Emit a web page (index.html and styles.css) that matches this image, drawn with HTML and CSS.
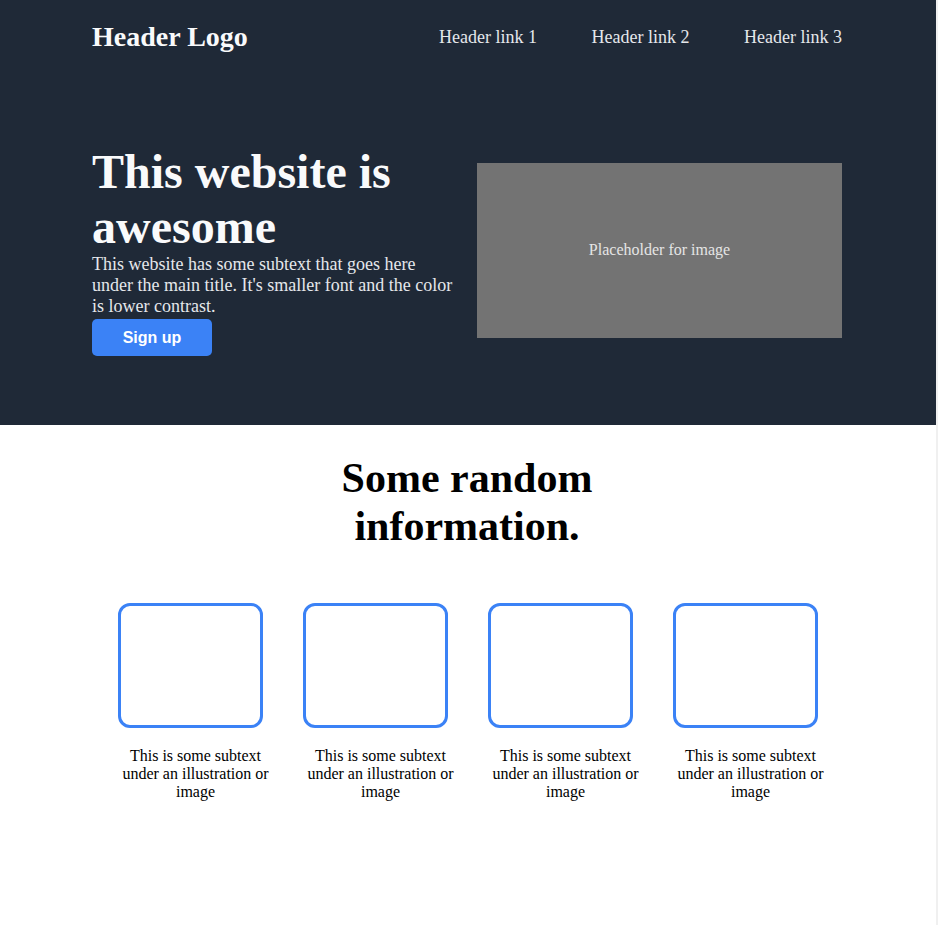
FILE: index.html
```html
<!DOCTYPE html>
<html lang="en">
<head>
  <meta charset="UTF-8" />
  <meta name="viewport" content="width=device-width, initial-scale=1.0"/>
  <title>Landing Page</title>
  <link rel="stylesheet" href="styles.css">
</head>
<body>
  <header class="hero">
    <div class="container">
      <div class="topbar">
        <div class="logo">Header Logo</div>
        <nav class="links">
          <a href="#">Header link 1</a>
          <a href="#">Header link 2</a>
          <a href="#">Header link 3</a>
        </nav>
      </div>

      <div class="hero-row">
        <div class="hero-text">
          <h1>This website is awesome</h1>
          <p>This website has some subtext that goes here under the main title. It's smaller font and the color is lower contrast.</p>
          <button class="signup">Sign up</button>
        </div>
        <div class="placeholder">Placeholder for image</div>
      </div>
    </div>
  </header>

  <section class="info">
    <div class="container">
      <h2>Some random information.</h2>
      <div class="cards">
        <div class="card">
          <div class="card-box"></div>
          <p>This is some subtext under an illustration or image</p>
        </div>
        <div class="card">
          <div class="card-box"></div>
          <p>This is some subtext under an illustration or image</p>
        </div>
        <div class="card">
          <div class="card-box"></div>
          <p>This is some subtext under an illustration or image</p>
        </div>
        <div class="card">
          <div class="card-box"></div>
          <p>This is some subtext under an illustration or image</p>
        </div>
      </div>
    </div>
  </section>
</body>
</html>
```

FILE: styles.css
```css
html {
  background: #f0f0f0;
}
body {
  font-family: "Liberation Serif", "Times New Roman", serif;
  margin: 0 2px 0 0;
  padding: 0;
  background: white;
  min-height: 925px;
}
.container {
  width: 750px;
  padding-right: 2px;
  margin: 0 auto;
}
/* Hero / header */
.hero {
  background: #1f2937;
  color: #f9fafb;
  padding: 21px 0 69px;
}
.topbar {
  display: flex;
  justify-content: space-between;
  align-items: center;
}
.logo {
  font-size: 28px;
  font-weight: bold;
}
.links {
  display: flex;
  gap: 54.5px;
}
.links a {
  color: #e5e7eb;
  font-size: 18px;
  text-decoration: none;
}
.hero-row {
  display: flex;
  align-items: center;
  gap: 20px;
  margin-top: 91px;
}
.hero-text {
  flex: 1;
}
.hero-text h1 {
  font-size: 48px;
  margin: 0;
}
.hero-text p {
  font-size: 18px;
  color: #e5e7eb;
  margin: 0;
}
.signup {
  margin-top: 2px;
  width: 120px;
  height: 37px;
  border: none;
  border-radius: 5px;
  background: #3b82f6;
  color: white;
  font-family: "Liberation Sans", Arial, sans-serif;
  font-size: 16px;
  font-weight: bold;
}
.placeholder {
  width: 365px;
  height: 175px;
  background: #737373;
  color: #e5e5e5;
  font-size: 16px;
  display: flex;
  align-items: center;
  justify-content: center;
}
/* Info section */
.info h2 {
  font-size: 42px;
  text-align: center;
  width: 300px;
  margin: 29px auto 0;
}
.cards {
  display: flex;
  gap: 30px;
  padding-left: 26px;
  margin-top: 53px;
}
.card {
  width: 155px;
}
.card-box {
  box-sizing: border-box;
  width: 145px;
  height: 125px;
  border: 3px solid #3b82f6;
  border-radius: 12px;
}
.card p {
  font-size: 16px;
  text-align: center;
  margin: 19px 0 0;
}
```
